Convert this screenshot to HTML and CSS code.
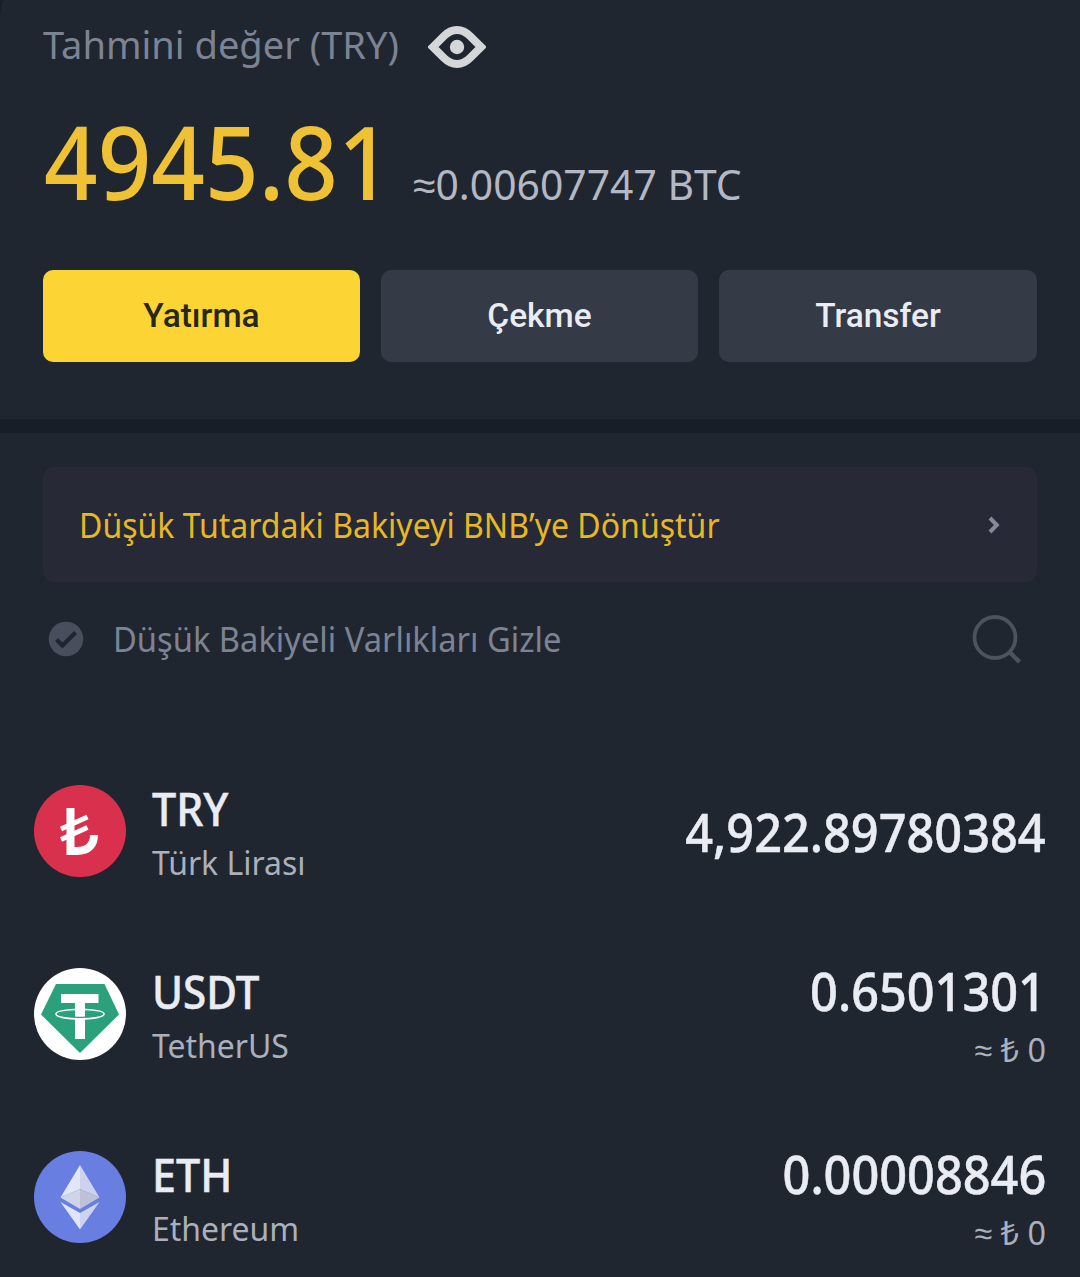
FILE: index.html
```html
<!DOCTYPE html>
<html lang="tr">
<head>
<meta charset="utf-8">
<title>Cüzdan</title>
<link rel="stylesheet" href="styles.css">
</head>
<body>
<main class="wallet">
  <section class="summary">
    <div class="estimate">
      <span class="estimate-label">Tahmini değer (TRY)</span>
      <svg class="eye" viewBox="0 0 58 44" width="58" height="44">
        <path d="M5 22 L16 11 C24 3 34 3 42 11 L53 22 L42 33 C34 41 24 41 16 33 Z" fill="none" stroke="#d5d6d8" stroke-width="8"/>
        <circle cx="29" cy="22" r="7.2" fill="#d5d6d8"/>
      </svg>
    </div>
    <div class="total">
      <span class="total-value">4945.81</span>
      <span class="total-btc">≈0.00607747 BTC</span>
    </div>
    <div class="actions">
      <button class="action action-primary">Yatırma</button>
      <button class="action">Çekme</button>
      <button class="action">Transfer</button>
    </div>
  </section>
  <section class="assets">
    <a class="convert">
      <span class="convert-text">Düşük Tutardaki Bakiyeyi BNB’ye Dönüştür</span>
      <svg class="chevron" viewBox="0 0 12 18" width="12" height="18"><path d="M2 2 L8.8 9 L2 16" fill="none" stroke="#848a9a" stroke-width="4"/></svg>
    </a>
    <div class="filter">
      <svg class="check" viewBox="0 0 36 36" width="36" height="36">
        <circle cx="18" cy="18" r="17.3" fill="#474f5d"/>
        <path d="M8.5 18.5 L14.5 24.5 L27.5 11.5" fill="none" stroke="#202630" stroke-width="4.2"/>
      </svg>
      <span class="filter-text">Düşük Bakiyeli Varlıkları Gizle</span>
      <svg class="search" viewBox="0 0 50 50" width="50" height="50">
        <circle cx="23" cy="23.500" r="20.5" fill="none" stroke="#4b535d" stroke-width="3.8"/>
        <path d="M37.5 38 L47.5 48" stroke="#4b535d" stroke-width="4.4"/>
      </svg>
    </div>
    <ul class="list">
      <li class="asset">
        <svg class="coin" viewBox="0 0 92 92">
          <circle cx="46" cy="46" r="46" fill="#d9304e"/>
          <path d="M36.5 23 V66 H43 C55 66 60 59.5 60 50" fill="none" stroke="#fff" stroke-width="8"/>
          <path d="M27 44 L53.5 32 M27 54.5 L53.5 42.5" stroke="#fff" stroke-width="5"/>
        </svg>
        <div class="names"><span class="symbol">TRY</span><span class="name">Türk Lirası</span></div>
        <div class="amounts amounts-single"><span class="amount">4,922.89780384</span></div>
      </li>
      <li class="asset">
        <svg class="coin" viewBox="0 0 92 92">
          <circle cx="46" cy="46" r="46" fill="#fff"/>
          <path d="M22 16 H70.5 L85 46.5 L46 85 L7 46.5 Z" fill="#2aa17b"/>
          <path d="M27 26 H64.5 V35 H51 V71 H41 V35 H27 Z" fill="#fff"/>
          <path d="M41 41.5 C29 42 22 43.5 22 46 C22 49 33 51 46 51 C59 51 70 49 70 46 C70 43.5 63 42 51 41.5" fill="none" stroke="#fff" stroke-width="1.6"/>
          <path d="M41 48.6 Q46 49 51 48.6 V49.8 Q46 50.2 41 49.8 Z" fill="#2aa17b"/>
        </svg>
        <div class="names"><span class="symbol symbol-usdt">USDT</span><span class="name">TetherUS</span></div>
        <div class="amounts"><span class="amount">0.6501301</span><span class="fiat">≈ ₺ 0</span></div>
      </li>
      <li class="asset">
        <svg class="coin" viewBox="0 0 92 92">
          <circle cx="46" cy="46" r="46" fill="#687ee0"/>
          <path d="M46 14 L26.5 46.5 L46 38 Z" fill="#e2e6f6"/>
          <path d="M46 14 L65.5 46.5 L46 38 Z" fill="#cdd3ef"/>
          <path d="M26.5 46.5 L46 38 V58 Z" fill="#d0d4e8"/>
          <path d="M65.5 46.5 L46 38 V58 Z" fill="#bec2d8"/>
          <path d="M26.5 51 L46 62 V78.5 Z" fill="#e0e5f8"/>
          <path d="M65.5 51 L46 62 V78.5 Z" fill="#ccd3f1"/>
        </svg>
        <div class="names"><span class="symbol">ETH</span><span class="name">Ethereum</span></div>
        <div class="amounts"><span class="amount">0.00008846</span><span class="fiat">≈ ₺ 0</span></div>
      </li>
    </ul>
  </section>
</main>
</body>
</html>
```
FILE: styles.css
```css
* { box-sizing: border-box; }
body {
  margin: 0;
  background: #181e27;
  font-family: "Noto Sans", sans-serif;
  white-space: nowrap;
}
.wallet {
  height: 1277px;
  overflow: hidden;
}
.summary {
  height: 419px;
  padding: 0 43px;
  background: #202630;
  border-top-left-radius: 5px 20px;
}
.estimate {
  display: flex;
  gap: 29px;
  height: 87px;
}
.estimate-label {
  width: 356px;
  font-size: 39px;
  line-height: 87px;
  color: #7c8494;
  transform: scaleX(0.975);
  transform-origin: left;
}
.eye { margin-top: 25px; }
.total {
  display: flex;
  align-items: baseline;
  height: 183px;
  line-height: 147px;
}
.total-value {
  width: 369px;
  margin-left: 1px;
  font-size: 102px;
  font-weight: 500;
  color: #efc135;
  transform: scaleX(0.92);
  transform-origin: left;
}
.total-btc {
  font-size: 42px;
  color: #b3b8c4;
  transform: scaleX(0.973);
  transform-origin: left;
}
.actions {
  display: grid;
  grid-template-columns: 317px 317px 1fr;
  gap: 21px;
}
.action {
  height: 92px;
  padding: 0;
  border: 0;
  border-radius: 10px;
  background: #343a46;
  color: #e9ecf3;
  font: 500 33.5px/92px Roboto, sans-serif;
}
.action-primary { background: #fcd535; color: #28271f; }
.assets {
  height: 844px;
  margin-top: 14px;
  padding: 34px 34px 0;
  background: #202630;
}
.convert {
  display: flex;
  align-items: center;
  justify-content: space-between;
  height: 115px;
  margin: 0 9px;
  padding: 0 37px 0 36px;
  border-radius: 11px;
  background: #272a36;
}
.convert-text {
  font-size: 34px;
  color: #e6b825;
  transform: scaleX(0.942);
  transform-origin: left;
}
.filter {
  display: flex;
  align-items: center;
  height: 114px;
  padding: 0 24px 0 14px;
}
.filter-text {
  flex: 1;
  margin-left: 29px;
  font-size: 34px;
  color: #7c8494;
  transform: scaleX(0.961);
  transform-origin: left;
}
.list {
  margin: 43px 0 0;
  padding: 0;
  list-style: none;
}
.asset {
  display: flex;
  align-items: center;
  height: 183px;
}
.coin { width: 92px; height: 92px; }
.names {
  display: flex;
  flex: 1;
  flex-direction: column;
  margin-left: 26px;
  padding-top: 10px;
}
.symbol {
  font-size: 46px;
  font-weight: 500;
  line-height: 53px;
  color: #e9ecf3;
  -webkit-text-stroke: 0.5px #e9ecf3;
  transform: scaleX(0.935);
  transform-origin: left;
}
.symbol-usdt { transform: scaleX(0.915); }
.name {
  font-size: 33px;
  line-height: 55px;
  color: #aab0bc;
  transform: scaleX(0.968);
  transform-origin: left;
}
.amounts {
  display: flex;
  flex-direction: column;
  align-items: flex-end;
  padding-top: 10px;
}
.amounts-single { padding-top: 2px; }
.amount {
  font-size: 53px;
  font-weight: 500;
  line-height: 62px;
  color: #e9ecf3;
  -webkit-text-stroke: 0.5px #e9ecf3;
  transform: scaleX(0.918);
  transform-origin: right;
}
.fiat {
  font-size: 33px;
  line-height: 55px;
  color: #aab0bc;
  transform: scaleX(0.98);
  transform-origin: right;
}
```
